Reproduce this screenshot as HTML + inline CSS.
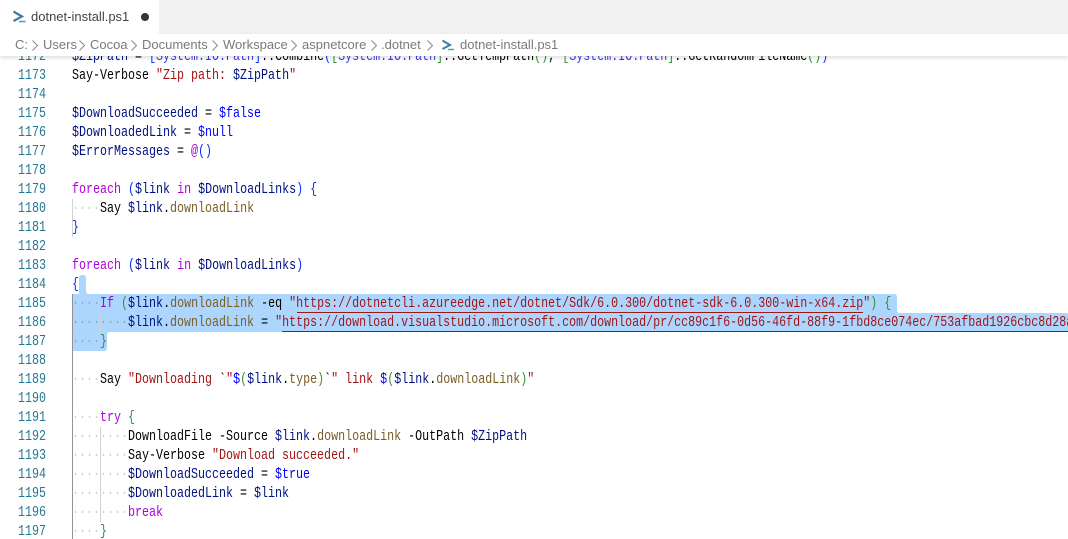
<!DOCTYPE html>
<html lang="en">
<head>
<meta charset="utf-8">
<title>dotnet-install.ps1</title>
<style>
html,body{margin:0;padding:0;width:1068px;height:539px;overflow:hidden;background:#fff}
body{position:relative;font-family:"Liberation Sans",sans-serif}
.abs{position:absolute}
#tabbar{left:0;top:0;width:1068px;height:34px;background:#f1f1f1}
#tab{left:0;top:0;width:159px;height:34px;background:#fff}
#crumbs{left:0;top:34px;width:1068px;height:22px;background:#fff;box-shadow:0 2px 4px rgba(0,0,0,.13);z-index:5}
.tx{position:absolute;white-space:nowrap;font-size:13px;line-height:18px}
.c{color:#7a7a7a;top:36px}
.chev{position:absolute;top:39px}
#sel{left:0;top:0;z-index:0}
.guide{position:absolute;width:1px;z-index:1}
.ul{position:absolute;height:1px;background:#a31515;z-index:2}
.code{position:absolute;top:47px;transform:scaleX(.7778);transform-origin:0 0;font-family:"Liberation Mono",monospace;font-size:15px;line-height:19px;white-space:pre;z-index:3}
#nums{left:18px;color:#237893}
#src{left:72px;color:#000}
.k{color:#af00db}.v{color:#001080}.p{color:#795e26}.s{color:#a31515}.l{color:#0000ff}.t{color:#3a3aee}
.a{color:#0431fa}.b{color:#319331}.d{color:#7b3814}.w{color:#cfcfcf}.x{color:#8ea9c4}
</style>
</head>
<body>
<div class="abs" id="tabbar"></div>
<div class="abs" id="tab"></div>
<svg class="abs" style="left:12px;top:9px" width="15" height="15" viewBox="0 0 15 15"><path d="M1.5 2.5L10 7.5L1.5 12" fill="none" stroke="#3f7f9e" stroke-width="2.2"/><path d="M7 12.5H13.5" stroke="#5a9ab8" stroke-width="1.6"/></svg>
<div class="tx" style="left:31px;top:8px;color:#444">dotnet-install.ps1</div>
<svg class="abs" style="left:140px;top:12px" width="10" height="10"><circle cx="5" cy="5" r="4" fill="#333"/></svg>

<svg class="abs" id="sel" width="1068" height="539"><path d="M79 294V278Q79 275 82 275H83Q86 275 86 278V291Q86 294 89 294H894Q897 294 897 297V310Q897 313 900 313H1068V332H110Q107 332 107 335V348Q107 351 104 351H75Q72 351 72 348V294Z" fill="#add6ff"/></svg>

<div class="guide" style="left:72px;top:199px;height:38px;background:#d3d3d3"></div>
<div class="guide" style="left:72px;top:294px;height:245px;background:#939393"></div>
<div class="guide" style="left:100px;top:313px;height:19px;background:#d3d3d3"></div>
<div class="guide" style="left:100px;top:427px;height:95px;background:#d3d3d3"></div>
<div class="ul" style="left:297px;top:312px;width:566px"></div>
<div class="ul" style="left:282px;top:331px;width:786px"></div>

<div class="code" id="nums">1172
1173
1174
1175
1176
1177
1178
1179
1180
1181
1182
1183
1184
1185
1186
1187
1188
1189
1190
1191
1192
1193
1194
1195
1196
1197</div>
<div class="code" id="src"><span class="v">$ZipPath</span> = <span class="a">[</span><span class="t">System.IO.Path</span><span class="a">]</span>::Combine<span class="a">(</span><span class="b">[</span><span class="t">System.IO.Path</span><span class="b">]</span>::GetTempPath<span class="b">()</span>, <span class="b">[</span><span class="t">System.IO.Path</span><span class="b">]</span>::GetRandomFileName<span class="b">()</span><span class="a">)</span>
Say-Verbose <span class="s">"Zip path: </span><span class="v">$ZipPath</span><span class="s">"</span>

<span class="v">$DownloadSucceeded</span> = <span class="l">$false</span>
<span class="v">$DownloadedLink</span> = <span class="l">$null</span>
<span class="v">$ErrorMessages</span> = <span class="k">@</span><span class="a">()</span>

<span class="k">foreach</span> <span class="a">(</span><span class="v">$link</span> <span class="k">in</span> <span class="v">$DownloadLinks</span><span class="a">)</span> <span class="a">{</span>
<span class="w">····</span>Say <span class="v">$link</span>.<span class="p">downloadLink</span>
<span class="a">}</span>

<span class="k">foreach</span> <span class="a">(</span><span class="v">$link</span> <span class="k">in</span> <span class="v">$DownloadLinks</span><span class="a">)</span>
<span class="a">{</span>
<span class="x">····</span><span class="k">If</span> <span class="b">(</span><span class="v">$link</span>.<span class="p">downloadLink</span> -eq <span class="s">"https://dotnetcli.azureedge.net/dotnet/Sdk/6.0.300/dotnet-sdk-6.0.300-win-x64.zip"</span><span class="b">)</span> <span class="b">{</span>
<span class="x">········</span><span class="v">$link</span>.<span class="p">downloadLink</span> = <span class="s">"https://download.visualstudio.microsoft.com/download/pr/cc89c1f6-0d56-46fd-88f9-1fbd8ce074ec/753afbad1926cbc8d28a</span>
<span class="x">····</span><span class="b">}</span>

<span class="w">····</span>Say <span class="s">"Downloading </span>`<span class="s">"</span><span class="l">$</span><span class="b">(</span><span class="v">$link</span>.<span class="p">type</span><span class="b">)</span>`<span class="s">" link </span><span class="l">$</span><span class="b">(</span><span class="v">$link</span>.<span class="p">downloadLink</span><span class="b">)</span><span class="s">"</span>

<span class="w">····</span><span class="k">try</span> <span class="b">{</span>
<span class="w">········</span>DownloadFile -Source <span class="v">$link</span>.<span class="p">downloadLink</span> -OutPath <span class="v">$ZipPath</span>
<span class="w">········</span>Say-Verbose <span class="s">"Download succeeded."</span>
<span class="w">········</span><span class="v">$DownloadSucceeded</span> = <span class="l">$true</span>
<span class="w">········</span><span class="v">$DownloadedLink</span> = <span class="v">$link</span>
<span class="w">········</span><span class="k">break</span>
<span class="w">····</span><span class="b">}</span></div>

<div class="abs" id="crumbs"></div>
<div style="position:absolute;left:0;top:0;z-index:6">
<div class="tx c" style="left:15px">C:</div>
<div class="tx c" style="left:43px">Users</div>
<div class="tx c" style="left:90px">Cocoa</div>
<div class="tx c" style="left:142px">Documents</div>
<div class="tx c" style="left:223px">Workspace</div>
<div class="tx c" style="left:302px">aspnetcore</div>
<div class="tx c" style="left:381px">.dotnet</div>
<div class="tx c" style="left:460px">dotnet-install.ps1</div>
<svg class="chev" style="left:31px" width="8" height="13"><path d="M1.5 1.5L6.5 6.5L1.5 11.5" fill="none" stroke="#888"/></svg>
<svg class="chev" style="left:78px" width="8" height="13"><path d="M1.5 1.5L6.5 6.5L1.5 11.5" fill="none" stroke="#888"/></svg>
<svg class="chev" style="left:130px" width="8" height="13"><path d="M1.5 1.5L6.5 6.5L1.5 11.5" fill="none" stroke="#888"/></svg>
<svg class="chev" style="left:211px" width="8" height="13"><path d="M1.5 1.5L6.5 6.5L1.5 11.5" fill="none" stroke="#888"/></svg>
<svg class="chev" style="left:290px" width="8" height="13"><path d="M1.5 1.5L6.5 6.5L1.5 11.5" fill="none" stroke="#888"/></svg>
<svg class="chev" style="left:370px" width="8" height="13"><path d="M1.5 1.5L6.5 6.5L1.5 11.5" fill="none" stroke="#888"/></svg>
<svg class="chev" style="left:426px" width="8" height="13"><path d="M1.5 1.5L6.5 6.5L1.5 11.5" fill="none" stroke="#888"/></svg>
<svg class="abs" style="left:441px;top:38px" width="15" height="15" viewBox="0 0 15 15"><path d="M1.5 2.5L9 7L1.5 11" fill="none" stroke="#3f7f9e" stroke-width="2"/><path d="M7 11.5H13" stroke="#5a9ab8" stroke-width="1.5"/></svg>
</div>
</body>
</html>
